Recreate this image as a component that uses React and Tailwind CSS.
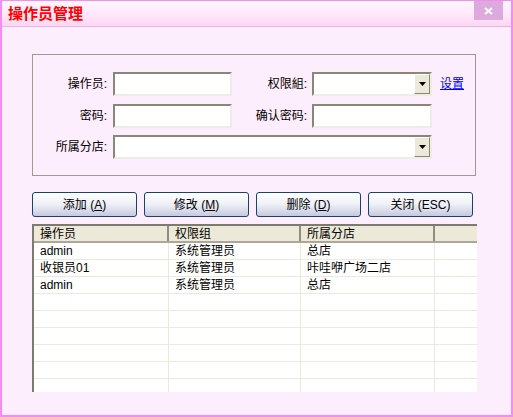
import React from "react";

const font = { fontFamily: '"Liberation Sans", "Noto Sans CJK SC", sans-serif' };

function Input({ w }) {
  return (
    <div
      className={`${w} h-[24px] bg-white border-2 border-t-[#8a877a] border-l-[#8a877a] border-r-[#efece2] border-b-[#efece2]`}
    />
  );
}

function Select({ w }) {
  return (
    <div
      className={`${w} h-[24px] bg-white border-2 border-t-[#8a877a] border-l-[#8a877a] border-r-[#efece2] border-b-[#efece2] flex justify-end items-stretch`}
    >
      <div className="w-[16px] bg-[#ece9d8] border border-t-white border-l-white border-r-[#8a877a] border-b-[#8a877a] flex items-center justify-center">
        <svg width="7" height="4" viewBox="0 0 7 4">
          <path d="M0 0 H7 L3.5 4 Z" fill="#000" />
        </svg>
      </div>
    </div>
  );
}

function Btn({ label, k, tail }) {
  return (
    <div className="w-[105px] h-[25px] rounded-[3px] border border-[#1f3f70] bg-gradient-to-b from-white via-[#eef0f6] to-[#c5c9de] flex items-center justify-center text-[12px] text-black">
      <span className="whitespace-pre">
        {label} (<span className="underline">{k}</span>
        {tail})
      </span>
    </div>
  );
}

const rows = [
  ["admin", "系统管理员", "总店"],
  ["收银员01", "系统管理员", "咔哇咿广场二店"],
  ["admin", "系统管理员", "总店"],
  ["", "", ""],
  ["", "", ""],
  ["", "", ""],
  ["", "", ""],
  ["", "", ""],
];

export default function App() {
  return (
    <div
      style={font}
      className="w-[513px] h-[417px] border-2 border-t border-[#f38ef0] bg-[#fdeefd] flex flex-col overflow-hidden"
    >
      {/* Title bar */}
      <div className="h-[26px] shrink-0 bg-gradient-to-b from-[#fff6fd] via-[#ffe9fa] to-[#fcd6f2] border-b border-[#ebb5e3] flex items-start justify-between">
        <div className="pl-[6px] pt-[4px] text-[15px] leading-[17px] font-bold text-[#ff0000]">
          操作员管理
        </div>
        <div className="mr-[8px] mt-0 w-[29px] h-[19px] bg-[#dcaadc] flex items-center justify-center">
          <svg width="9" height="8" viewBox="0 0 9 8">
            <path d="M1 1 L8 7 M8 1 L1 7" stroke="#fff" strokeWidth="2" />
          </svg>
        </div>
      </div>

      {/* Body */}
      <div className="pl-[30px] pt-[27px] flex flex-col">
        {/* Group box */}
        <div className="w-[444px] h-[122px] border border-[#a09a90] pt-[17px] flex flex-col gap-[8px] text-[12px] text-black">
          <div className="flex items-center h-[24px]">
            <div className="w-[75px] text-right pr-[1px]">操作员:</div>
            <div className="w-[5px]" />
            <Input w="w-[119px]" />
            <div className="w-[75px] text-right">权限組:</div>
            <div className="w-[5px]" />
            <Select w="w-[120px]" />
            <a className="ml-[8px] text-[#0000ff] underline">设置</a>
          </div>
          <div className="flex items-center h-[24px]">
            <div className="w-[75px] text-right pr-[1px]">密码:</div>
            <div className="w-[5px]" />
            <Input w="w-[119px]" />
            <div className="w-[75px] text-right">确认密码:</div>
            <div className="w-[5px]" />
            <Input w="w-[120px]" />
          </div>
          <div className="flex items-center h-[24px] -mt-[1px]">
            <div className="w-[75px] text-right pr-[1px]">所属分店:</div>
            <div className="w-[5px]" />
            <Select w="w-[319px]" />
          </div>
        </div>

        {/* Buttons */}
        <div className="mt-[16px] flex gap-[7px]">
          <Btn label="添加" k="A" tail="" />
          <Btn label="修改" k="M" tail="" />
          <Btn label="删除" k="D" tail="" />
          <Btn label="关闭" k="" tail="ESC" />
        </div>

        {/* Table */}
        <div className="mt-[7px] w-[445px] h-[168px] bg-white border-l-2 border-t-2 border-l-[#7d7a70] border-t-[#7d7a70] flex flex-col text-[12px] text-black overflow-hidden">
          <div className="h-[17px] shrink-0 flex bg-[#ece9d8] border-b-2 border-b-[#aca899]">
            {[
              ["w-[135px]", "操作员"],
              ["w-[132px]", "权限组"],
              ["w-[134px]", "所属分店"],
              ["flex-1", ""],
            ].map(([w, t], i) => (
              <div
                key={i}
                className={`${w} h-full pl-[6px] leading-[16px] ${i < 3 ? "border-r-2 border-r-[#8f8c80]" : ""}`}
              >
                {t}
              </div>
            ))}
          </div>
          {rows.map((r, i) => (
            <div key={i} className="h-[17px] shrink-0 flex border-b border-[#ebe8dc]">
              <div className="w-[135px] pl-[6px] leading-[17px] border-r border-[#ebe8dc]">{r[0]}</div>
              <div className="w-[132px] pl-[6px] leading-[17px] border-r border-[#ebe8dc]">{r[1]}</div>
              <div className="w-[134px] pl-[6px] leading-[17px] border-r border-[#ebe8dc]">{r[2]}</div>
              <div className="flex-1" />
            </div>
          ))}
          <div className="flex-1 flex">
            <div className="w-[135px] border-r border-[#ebe8dc]" />
            <div className="w-[132px] border-r border-[#ebe8dc]" />
            <div className="w-[134px] border-r border-[#ebe8dc]" />
          </div>
        </div>
      </div>
    </div>
  );
}
